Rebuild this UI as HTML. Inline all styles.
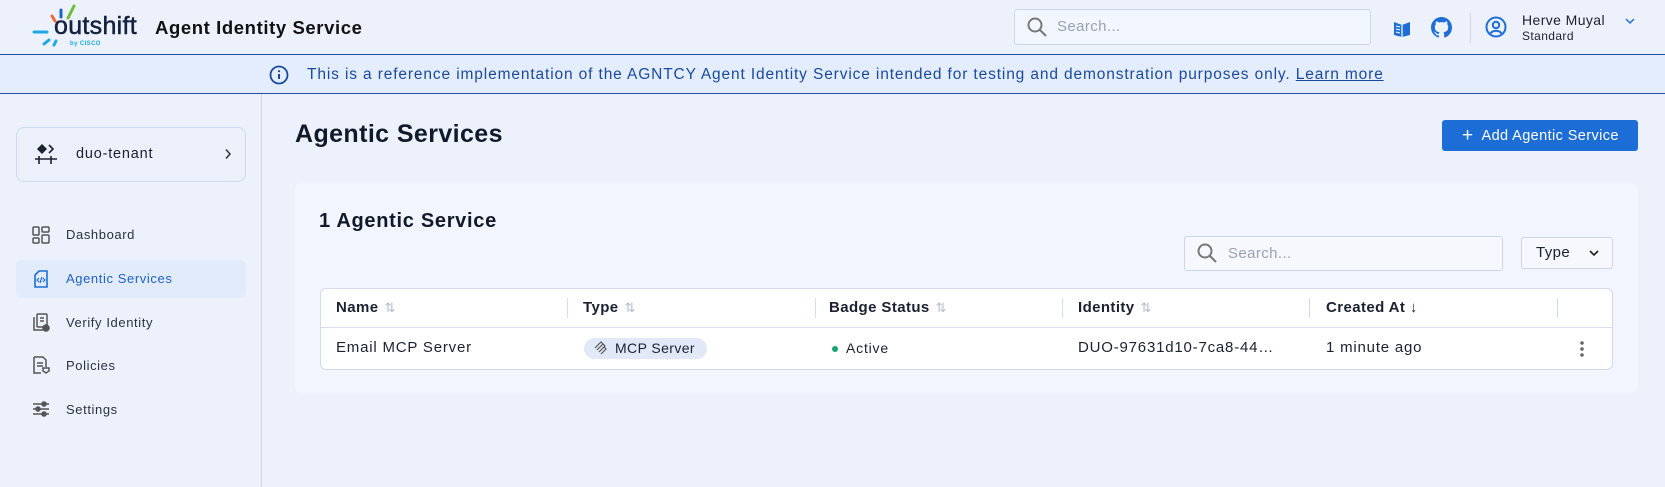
<!DOCTYPE html><html><head><meta charset="utf-8"><style>
*{box-sizing:border-box;margin:0;padding:0}
body{width:1665px;height:487px;overflow:hidden;background:#edf1fb;font-family:"Liberation Sans",sans-serif;color:#1b2130;position:relative;letter-spacing:0.4px}
.a{position:absolute}
.hdr{left:0;top:0;width:1665px;height:55px;border-bottom:1.5px solid #1e4fa3;background:#edf1fb}
.ban{left:0;top:55px;width:1665px;height:39px;background:#e3edfd;border-bottom:1.5px solid #1e4fa3;color:#1b4a9c;font-size:15.5px}
.side{left:0;top:94px;width:262px;height:393px;border-right:1px solid #cfd8ee}
.nav{left:66px;font-size:13px;color:#2a3142;letter-spacing:0.6px}
.th{top:288px;height:39px;line-height:39px;font-weight:bold;font-size:15px}
.td{top:327px;height:42px;line-height:42px;font-size:15px;letter-spacing:0.8px}
.sep{top:298px;width:1px;height:20px;background:#d5ddef}
.srt{color:#b4bccb;font-weight:normal;font-size:13px;margin-left:6px}
</style></head><body>
<div class="a hdr"></div>
<svg class="a" style="left:32px;top:4px" width="50" height="46" viewBox="0 0 50 46"><path d="M2 28h13" stroke="#1aa9e6" stroke-width="3" stroke-linecap="round"/><path d="M20 12l3 5" stroke="#ef6b3a" stroke-width="3" stroke-linecap="round"/><path d="M29 6v7" stroke="#1e63c8" stroke-width="3" stroke-linecap="round"/><path d="M42 2l-6 12" stroke="#6cbf3a" stroke-width="3" stroke-linecap="round"/><path d="M12 40l5-4M22 41l2-4" stroke="#1aa9e6" stroke-width="3" stroke-linecap="round"/></svg>
<div class="a" style="left:54px;top:12px;font-size:25px;color:#14223f;letter-spacing:0.3px;-webkit-text-stroke:0.5px #14223f">outshift</div>
<div class="a" style="left:70px;top:41px;font-size:6px;color:#1aa9e6;font-weight:bold">by CISCO</div>
<div class="a" style="left:155px;top:17px;font-size:18.5px;font-weight:bold;color:#111;letter-spacing:0.6px">Agent Identity Service</div>
<div class="a" style="left:1014px;top:9px;width:357px;height:36px;border:1.5px solid #ccd6ee;border-radius:3px;background:#f2f6fe"></div>
<svg class="a" style="left:1026px;top:16px" width="22" height="22" viewBox="0 0 22 22"><circle cx="9" cy="9" r="6.5" fill="none" stroke="#777" stroke-width="2"/><path d="M14 14l6 6" stroke="#777" stroke-width="2"/></svg>
<div class="a" style="left:1057px;top:18px;font-size:15px;color:#9aa2b2">Search...</div>
<svg class="a" style="left:1392px;top:18px" width="20" height="20" viewBox="0 0 20 20"><path d="M2 4l8 3 8-3v13l-8 2-8-2z" fill="#1d6fd6"/><path d="M10 7v12" stroke="#fff" stroke-width="1.2"/><path d="M4 8l4 1M4 11l4 1M4 14l4 1" stroke="#fff" stroke-width="1"/></svg>
<svg class="a" style="left:1431px;top:17px" width="21" height="21" viewBox="0 0 16 16"><path fill="#1d6fd6" d="M8 0C3.58 0 0 3.58 0 8c0 3.54 2.29 6.53 5.47 7.59.4.07.55-.17.55-.38v-1.34c-2.23.49-2.7-1.07-2.7-1.07-.36-.93-.89-1.17-.89-1.17-.73-.5.05-.49.05-.49.81.06 1.23.83 1.23.83.72 1.23 1.88.87 2.34.67.07-.52.28-.87.51-1.07-1.78-.2-3.64-.89-3.64-3.95 0-.87.31-1.59.82-2.15-.08-.2-.36-1.02.08-2.12 0 0 .67-.21 2.2.82a7.6 7.6 0 014 0c1.53-1.04 2.2-.82 2.2-.82.44 1.1.16 1.92.08 2.12.51.56.82 1.27.82 2.15 0 3.07-1.87 3.75-3.65 3.95.29.25.54.73.54 1.48v2.2c0 .21.15.46.55.38A8.01 8.01 0 0016 8c0-4.42-3.58-8-8-8z"/></svg>
<div class="a" style="left:1470px;top:13px;width:1px;height:30px;background:#d0d7e6"></div>
<svg class="a" style="left:1485px;top:16px" width="22" height="22" viewBox="0 0 22 22"><circle cx="11" cy="11" r="9.5" fill="none" stroke="#1d6fd6" stroke-width="2"/><circle cx="11" cy="9" r="3.2" fill="none" stroke="#1d6fd6" stroke-width="2"/><path d="M5.5 17.5c2-3.5 9-3.5 11 0" fill="none" stroke="#1d6fd6" stroke-width="2"/></svg>
<div class="a" style="left:1522px;top:12px;font-size:14px;color:#1b2130">Herve Muyal</div>
<div class="a" style="left:1522px;top:29px;font-size:12px;color:#1b2130">Standard</div>
<svg class="a" style="left:1624px;top:17px" width="12" height="8" viewBox="0 0 12 8"><path d="M2 2l4 4 4-4" fill="none" stroke="#1d6fd6" stroke-width="1.5"/></svg>

<div class="a ban"></div>
<svg class="a" style="left:269px;top:65px" width="20" height="20" viewBox="0 0 20 20"><circle cx="10" cy="10" r="8.5" fill="none" stroke="#1b4a9c" stroke-width="1.8"/><path d="M10 9v5" stroke="#1b4a9c" stroke-width="2"/><circle cx="10" cy="6.2" r="1.1" fill="#1b4a9c"/></svg>
<div class="a" style="left:307px;top:66px;font-size:15.5px;color:#1b4a9c;white-space:nowrap;letter-spacing:0.87px">This is a reference implementation of the AGNTCY Agent Identity Service intended for testing and demonstration purposes only. <u>Learn more</u></div>

<div class="a side"></div>
<div class="a" style="left:16px;top:127px;width:230px;height:55px;border:1px solid #cfd9f0;border-radius:8px;background:#ebf0fb"></div>
<svg class="a" style="left:33px;top:143px" width="26" height="22" viewBox="0 0 26 22"><path d="M9 1l5 5-5 5-5-5z" fill="#1b2130"/><path d="M16 2l4 4-4 4" fill="none" stroke="#1b2130" stroke-width="1.6"/><path d="M2 16h22M6 13v8M18 13v8" stroke="#1b2130" stroke-width="1.6"/></svg>
<div class="a" style="left:76px;top:146px;font-size:14.5px;letter-spacing:0.8px">duo-tenant</div>
<svg class="a" style="left:224px;top:148px" width="8" height="12" viewBox="0 0 8 12"><path d="M2 1.5l4 4.5-4 4.5" fill="none" stroke="#333" stroke-width="1.5"/></svg>
<div class="a" style="left:16px;top:260px;width:230px;height:38px;border-radius:6px;background:#e2ebfc"></div>
<svg class="a" style="left:32px;top:226px" width="18" height="18" viewBox="0 0 18 18" fill="none" stroke="#555" stroke-width="1.5"><rect x="1" y="1" width="6" height="8" rx="1"/><rect x="10" y="1" width="7" height="5" rx="1"/><rect x="1" y="12" width="6" height="5" rx="1"/><rect x="10" y="9" width="7" height="8" rx="1"/></svg>
<div class="a nav" style="top:227px">Dashboard</div>
<svg class="a" style="left:33px;top:270px" width="16" height="18" viewBox="0 0 16 18" fill="none" stroke="#1d6fd6" stroke-width="1.6"><path d="M6 1h8v16H2V5z"/><path d="M6 8l-2 2 2 2M10 8l2 2-2 2M9 7l-2 6" stroke-width="1.2"/></svg>
<div class="a nav" style="top:271px;color:#1d62c4">Agentic Services</div>
<svg class="a" style="left:33px;top:313px" width="17" height="19" viewBox="0 0 17 19" fill="none" stroke="#555" stroke-width="1.5"><rect x="4" y="1" width="10" height="13" rx="1"/><path d="M1 4v13h9"/><path d="M7 5h4M7 8h4"/><circle cx="13" cy="15" r="3" fill="#555"/></svg>
<div class="a nav" style="top:315px">Verify Identity</div>
<svg class="a" style="left:33px;top:356px" width="17" height="19" viewBox="0 0 17 19" fill="none" stroke="#555" stroke-width="1.5"><path d="M1 1h9l3 3v7M8 17H1V1"/><path d="M4 7h6M4 10h6"/><path d="M10 12h6v3l-3 2-3-2z"/></svg>
<div class="a nav" style="top:358px">Policies</div>
<svg class="a" style="left:32px;top:401px" width="18" height="16" viewBox="0 0 18 16" stroke="#555" stroke-width="1.6"><path d="M1 3h16M1 8h16M1 13h16"/><circle cx="12" cy="3" r="2" fill="#555"/><circle cx="6" cy="8" r="2" fill="#555"/><circle cx="12" cy="13" r="2" fill="#555"/></svg>
<div class="a nav" style="top:402px">Settings</div>

<div class="a" style="left:295px;top:120px;font-size:25px;font-weight:bold;color:#111a2a">Agentic Services</div>
<div class="a" style="left:1442px;top:120px;width:196px;height:31px;background:#1c6ed6;border-radius:3px;color:#fff;font-size:14.5px;line-height:31px;padding-left:20px"><span style="font-size:19px;vertical-align:-1px;margin-right:8px">+</span>Add Agentic Service</div>

<div class="a" style="left:295px;top:183px;width:1343px;height:210px;background:#f2f5fd;border-radius:6px"></div>
<div class="a" style="left:319px;top:210px;font-size:20px;font-weight:bold;color:#111a2a;letter-spacing:0.7px">1 Agentic Service</div>
<div class="a" style="left:1184px;top:236px;width:319px;height:35px;border:1.5px solid #cbd5ee;border-radius:3px;background:#f6f8fe"></div>
<svg class="a" style="left:1196px;top:242px" width="22" height="22" viewBox="0 0 22 22"><circle cx="9" cy="9" r="6.5" fill="none" stroke="#777" stroke-width="2"/><path d="M14 14l6 6" stroke="#777" stroke-width="2"/></svg>
<div class="a" style="left:1228px;top:245px;font-size:15px;color:#9aa2b2">Search...</div>
<div class="a" style="left:1521px;top:237px;width:92px;height:32px;border:1.5px solid #cbd5ee;border-radius:3px;background:#f6f8fe;font-size:15px;line-height:29px;padding-left:14px">Type</div>
<svg class="a" style="left:1588px;top:249px" width="12" height="8" viewBox="0 0 12 8"><path d="M2 2l4 4 4-4" fill="none" stroke="#222" stroke-width="1.6"/></svg>

<div class="a" style="left:320px;top:288px;width:1293px;height:82px;border:1px solid #d0d9ee;border-radius:6px;background:#fff"></div>
<div class="a" style="left:321px;top:327px;width:1291px;height:1px;background:#d6def0"></div>
<div class="a sep" style="left:567px"></div><div class="a sep" style="left:815px"></div><div class="a sep" style="left:1062px"></div><div class="a sep" style="left:1309px"></div><div class="a sep" style="left:1557px"></div>
<div class="a th" style="left:336px">Name<span class="srt">⇅</span></div>
<div class="a th" style="left:583px">Type<span class="srt">⇅</span></div>
<div class="a th" style="left:829px">Badge Status<span class="srt">⇅</span></div>
<div class="a th" style="left:1078px">Identity<span class="srt">⇅</span></div>
<div class="a th" style="left:1326px">Created At <span style="font-weight:normal">↓</span></div>
<div class="a td" style="left:336px">Email MCP Server</div>
<div class="a" style="left:584px;top:338px;width:123px;height:21px;border-radius:11px;background:#e1e8f7;font-size:14px;line-height:21px;padding-left:31px">MCP Server</div>
<svg class="a" style="left:594px;top:341px" width="14" height="15" viewBox="0 0 14 15" fill="none" stroke="#555" stroke-width="1.2"><path d="M1 7l6-6 2 2-6 6M3 9l6-6 2 2-6 6M5 11l5-5 2 2-5 5"/></svg>
<div class="a" style="left:832px;top:346px;width:6px;height:6px;border-radius:50%;background:#17a673"></div>
<div class="a td" style="left:846px;font-size:14px">Active</div>
<div class="a td" style="left:1078px">DUO-97631d10-7ca8-44…</div>
<div class="a td" style="left:1326px">1 minute ago</div>
<div class="a" style="left:1580px;top:340px;width:4px;height:18px;background:radial-gradient(circle,#666 1.6px,transparent 2px) 0 0/4px 6px"></div>
</body></html>
